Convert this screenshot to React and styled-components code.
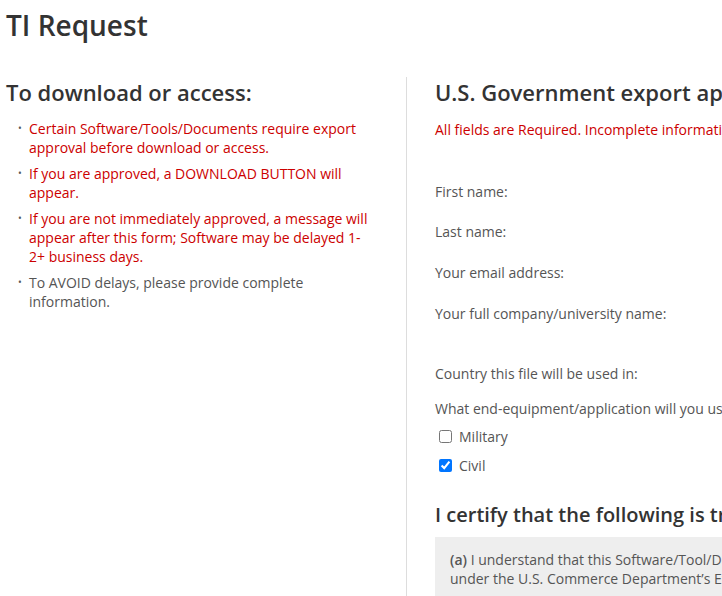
import React from "react";
import styled, { createGlobalStyle } from "styled-components";

const GlobalStyle = createGlobalStyle`
  html, body {
    margin: 0;
    padding: 0;
    background: #ffffff;
    overflow: hidden;
  }
  body {
    font-family: "Open Sans", "Liberation Sans", sans-serif;
    color: #555555;
  }
`;

const notes = [
  { text: "Certain Software/Tools/Documents require export approval before download or access.", alert: true },
  { text: "If you are approved, a DOWNLOAD BUTTON will appear.", alert: true },
  { text: "If you are not immediately approved, a message will appear after this form; Software may be delayed 1-2+ business days.", alert: true },
  { text: "To AVOID delays, please provide complete information.", alert: false }
];

const fields = [
  { label: "First name:", height: 40 },
  { label: "Last name:", height: 41 },
  { label: "Your email address:", height: 41 },
  { label: "Your full company/university name:", height: 60 },
  { label: "Country this file will be used in:", height: 35 },
  { label: "What end-equipment/application will you use this file for?", height: 23 }
];

const App = () => {
  return (
    <Page>
      <GlobalStyle />
      <Title>TI Request</Title>

      <Columns>
        <Sidebar>
          <SectionTitle>To download or access:</SectionTitle>
          <NoteList>
            {notes.map((note) => (
              <Note key={note.text}>
                <Marker>•</Marker>
                <NoteText $alert={note.alert}>{note.text}</NoteText>
              </Note>
            ))}
          </NoteList>
        </Sidebar>

        <Main>
          <SectionTitle>U.S. Government export approval (required for this download)</SectionTitle>
          <Required>
            All fields are Required. Incomplete information may delay your request.
          </Required>

          <Form>
            {fields.map((field) => (
              <FieldRow key={field.label} $height={field.height}>
                <Label>{field.label}</Label>
              </FieldRow>
            ))}
            <CheckRow>
              <Checkbox type="checkbox" readOnly />
              <CheckLabel>Military</CheckLabel>
            </CheckRow>
            <CheckRow>
              <Checkbox type="checkbox" checked readOnly />
              <CheckLabel>Civil</CheckLabel>
            </CheckRow>
          </Form>

          <CertifyTitle>I certify that the following is true and correct:</CertifyTitle>
          <CertifyBox>
            <strong>(a)</strong> I understand that this Software/Tool/Documentation may be subject to control
            <br />
            under the U.S. Commerce Department’s Export Administration Regulations (EAR).
          </CertifyBox>
        </Main>
      </Columns>
    </Page>
  );
};

const Page = styled.div`
  padding: 7px 0 0 6px;
  height: 596px;
  box-sizing: border-box;
  overflow: hidden;
`;

const Title = styled.h1`
  margin: 0;
  font-size: 28px;
  line-height: 36px;
  font-weight: 600;
  color: #333333;
`;

const Columns = styled.div`
  display: flex;
  margin-top: 34px;
  width: 1200px;
`;

const Sidebar = styled.div`
  flex: none;
  width: 400px;
  border-right: 1px solid #dddddd;
  min-height: 560px;
`;

const Main = styled.div`
  flex: none;
  width: 760px;
  padding-left: 28px;
  white-space: nowrap;
`;

const SectionTitle = styled.h2`
  margin: 0;
  font-size: 22px;
  line-height: 30px;
  font-weight: 600;
  color: #333333;
  white-space: nowrap;
`;

const NoteList = styled.ul`
  list-style: none;
  margin: 12px 0 0;
  padding: 0 0 0 12px;
  width: 351px;
`;

const Note = styled.li`
  display: flex;
  gap: 5px;
  margin-bottom: 7px;
  font-size: 14px;
  line-height: 19px;
`;

const Marker = styled.span`
  flex: none;
  width: 6px;
  font-size: 10px;
  line-height: 19px;
  color: #555555;
`;

const NoteText = styled.span`
  color: ${(props) => (props.$alert ? "#cc0000" : "#555555")};
`;

const Required = styled.p`
  margin: 13px 0 0;
  font-size: 14px;
  line-height: 19px;
  color: #cc0000;
`;

const Form = styled.div`
  margin-top: 43px;
`;

const FieldRow = styled.div`
  height: ${(props) => props.$height}px;
`;

const Label = styled.div`
  font-size: 14px;
  line-height: 19px;
  color: #555555;
`;

const CheckRow = styled.label`
  display: flex;
  align-items: center;
  height: 29px;
  padding-left: 4px;
  font-size: 14px;
  line-height: 19px;
`;

const Checkbox = styled.input`
  margin: 0 7px 0 0;
  width: 13px;
  height: 13px;
`;

const CheckLabel = styled.span`
  color: #555555;
`;

const CertifyTitle = styled.h3`
  margin: 21px 0 0;
  font-size: 20px;
  line-height: 28px;
  font-weight: 600;
  color: #333333;
`;

const CertifyBox = styled.div`
  margin-top: 8px;
  padding: 13px 15px;
  background: #eeeeee;
  font-size: 14px;
  line-height: 19px;
  color: #555555;

  strong {
    font-weight: 600;
  }
`;

export default App;
